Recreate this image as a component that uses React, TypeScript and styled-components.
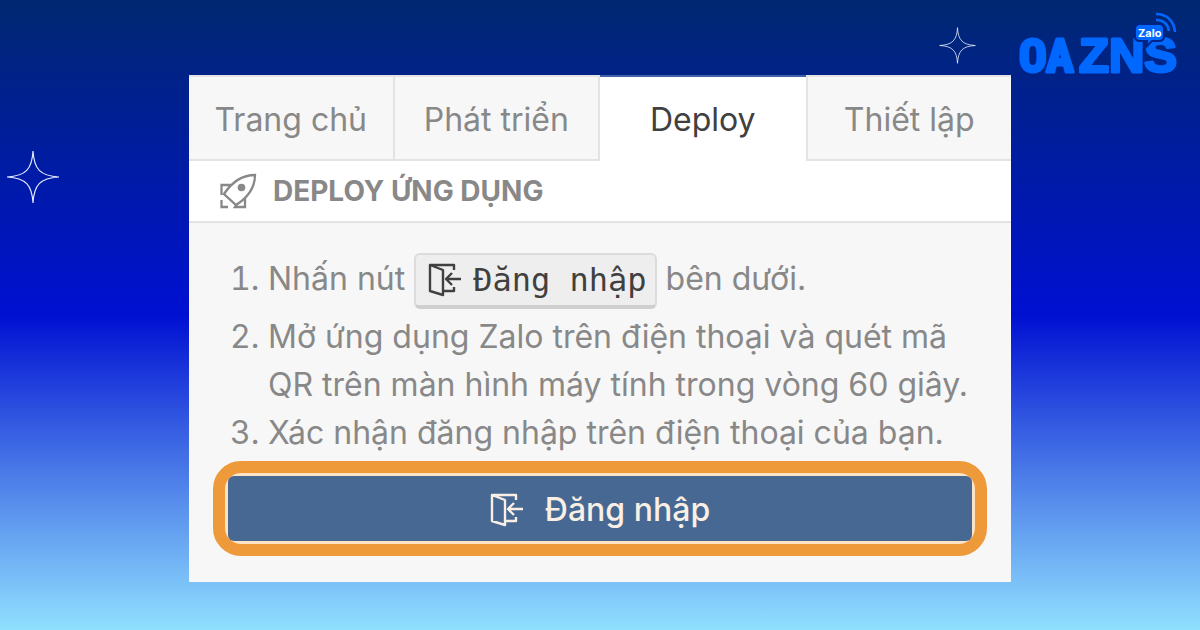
import React from "react";
import styled, { createGlobalStyle } from "styled-components";

const Global = createGlobalStyle`
  * { box-sizing: border-box; }
  body { margin: 0; font-family: Inter, "Liberation Sans", sans-serif; }
`;

const Page = styled.div`
  position: relative;
  min-height: 100vh;
  padding: 75px 189px 48px;
  background: linear-gradient(#002870 0%, #0010d2 50%, #4a7ae8 75%, #90e0ff 100%);
`;

const Panel = styled.main`
  background: #f7f7f7;
  color: #888888;
  font-size: 32px;
`;

const Tabs = styled.nav`
  display: grid;
  grid-template-columns: repeat(4, 1fr);
`;

const Tab = styled.button<{ $active?: boolean }>`
  height: 86px;
  padding: 2px 0 0;
  border: 0 solid #e3e3e3;
  border-width: 2px 2px 2px 0;
  background: #f7f7f7;
  color: inherit;
  font: inherit;
  &:last-child { border-width: 2px 0 2px 2px; }
  ${(p) =>
    p.$active &&
    `
    border-top-color: #3f63a8;
    border-bottom-color: #ffffff;
    border-right-width: 0;
    background: #ffffff;
    color: #404040;
  `}
`;

const Heading = styled.header`
  display: flex;
  align-items: center;
  gap: 16px;
  height: 62px;
  padding: 0 30px;
  background: #ffffff;
  border-bottom: 2px solid #e3e3e3;
`;

const Title = styled.h1`
  margin: 0;
  font-size: 28px;
  font-weight: 700;
`;

const Steps = styled.ol`
  margin: 0;
  padding: 26px 24px 0 79px;
  line-height: 48px;
`;

const Step = styled.li`
  &:first-child {
    padding-bottom: 4px;
    line-height: 60px;
  }
`;

const Key = styled.kbd`
  display: inline-flex;
  align-items: center;
  gap: 11px;
  height: 56px;
  padding: 0 8px 0 12px;
  border: 2px solid #dcdcdc;
  border-bottom: 4px solid #cfcfcf;
  border-radius: 6px;
  background: #eeeeee;
  color: #404040;
  font-family: "DejaVu Sans Mono", monospace;
  font-size: 32px;
  vertical-align: middle;
`;

const Highlight = styled.div`
  margin: 4px 24px 0;
  border: 12px solid #ef9a3a;
  border-radius: 28px;
  background: #fbe3c4;
  padding: 3px;
`;

const Login = styled.button`
  display: flex;
  align-items: center;
  justify-content: center;
  gap: 21px;
  width: 100%;
  height: 65px;
  padding: 2px 0 0;
  border: 0;
  border-radius: 6px;
  background: #476892;
  color: #f9efe4;
  font: inherit;
  font-weight: 500;
`;

const Foot = styled.div`
  height: 26px;
`;

const Logo = styled.div`
  position: absolute;
  top: 10px;
  right: 16px;
  color: #0068ff;
`;

const Star = styled.svg<{ $x: number; $y: number; $size: number }>`
  position: absolute;
  left: ${(p) => p.$x}px;
  top: ${(p) => p.$y}px;
  width: ${(p) => p.$size}px;
  height: ${(p) => p.$size}px;
`;

const Sparkle = (p: { x: number; y: number; size: number }) => (
  <Star $x={p.x} $y={p.y} $size={p.size} viewBox="0 0 54 54" aria-hidden="true">
    <path
      d="M27 1C28 19 34 26 53 27C34 28 28 35 27 53C26 35 20 28 1 27C20 26 26 19 27 1Z"
      fill="none"
      stroke="#dfe8ff"
      strokeWidth="1.200"
    />
  </Star>
);

const DoorIcon = () => (
  <svg width="34" height="34" viewBox="0 0 34 34" fill="none" stroke="currentColor" strokeWidth="2.400" strokeLinejoin="round" aria-hidden="true">
    <path d="M26 7V2H2V28L15 32V7L2 2M15 28H26V24M33 16H18M24 10L18 16L24 22" />
  </svg>
);

const RocketIcon = () => (
  <svg width="38" height="36" viewBox="0 0 38 36" fill="none" stroke="currentColor" strokeWidth="2.300" aria-hidden="true">
    <path d="M36 2C23 2 13 9 5 21L17 32C28 25 36 15 36 2ZM13 12H2.500V22M26 24V34H16L18 31M2.500 27V34H9" />
    <circle cx="22.500" cy="14.500" r="3.800" fill="currentColor" stroke="none" />
  </svg>
);

export default function App() {
  return (
    <Page>
      <Global />
      <Panel>
        <Tabs>
          <Tab>Trang chủ</Tab>
          <Tab>Phát triển</Tab>
          <Tab $active>Deploy</Tab>
          <Tab>Thiết lập</Tab>
        </Tabs>
        <Heading>
          <RocketIcon />
          <Title>DEPLOY ỨNG DỤNG</Title>
        </Heading>
        <Steps>
          <Step>
            Nhấn nút{" "}
            <Key>
              <DoorIcon />
              Đăng nhập
            </Key>{" "}
            bên dưới.
          </Step>
          <Step>Mở ứng dụng Zalo trên điện thoại và quét mã QR trên màn hình máy tính trong vòng 60 giây.</Step>
          <Step>Xác nhận đăng nhập trên điện thoại của bạn.</Step>
        </Steps>
        <Highlight>
          <Login>
            <DoorIcon />
            Đăng nhập
          </Login>
        </Highlight>
        <Foot />
      </Panel>
      <Sparkle x={6} y={150} size={54} />
      <Sparkle x={939} y={27} size={37} />
      <Logo>
        <svg width="166" height="80" viewBox="0 0 166 80" role="img" aria-label="Zalo OA ZNS">
          <g fill="currentColor" stroke="currentColor" strokeWidth="3" strokeLinejoin="round" fontWeight="700">
            <text x="1" y="62" fontSize="46" fontFamily="'Liberation Sans Narrow', 'Roboto Condensed', Roboto, sans-serif">OA</text>
            <text x="61" y="62" fontSize="49" fontFamily="'Liberation Sans', sans-serif">ZNS</text>
          </g>
          <path d="M122 14H141Q146 14 146 19V26Q146 31 141 31H134L129 36V31H122Q117 31 117 26V19Q117 14 122 14Z" fill="#0068ff" stroke="#002385" strokeWidth="2" />
          <text x="120" y="27" fill="#ffffff" fontFamily="Inter, sans-serif" fontWeight="700" fontSize="11">Zalo</text>
          <path d="M138 4C149 4 156 11 157 22M138 10C146 10 150 15 151 21" fill="none" stroke="#0068ff" strokeWidth="2.600" />
        </svg>
      </Logo>
    </Page>
  );
}
